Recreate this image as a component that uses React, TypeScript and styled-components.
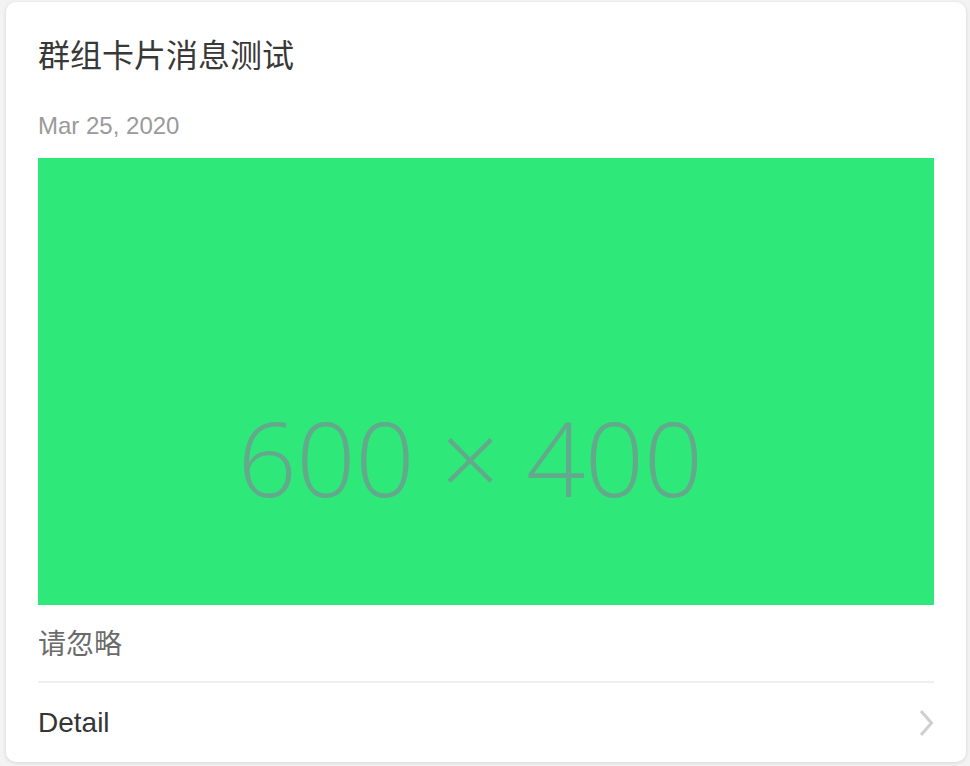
import React from "react";
import styled, { createGlobalStyle } from "styled-components";

const GlobalStyle = createGlobalStyle`
  html, body {
    margin: 0;
    padding: 0;
    background: #f3f3f3;
    font-family: "Liberation Sans", "Noto Sans CJK SC", sans-serif;
  }
`;

const Page = styled.div`
  padding: 2px 4px 4px 6px;
`;

const Card = styled.div`
  width: 960px;
  box-sizing: border-box;
  background: #ffffff;
  border-radius: 10px;
  box-shadow: 0 1px 4px rgba(0, 0, 0, 0.12);
  padding: 0 32px;
  display: flex;
  flex-direction: column;
`;

const Title = styled.h1`
  margin: 32px 0 0;
  font-family: "Liberation Sans", "Noto Sans CJK SC", sans-serif;
  font-weight: 400;
  font-size: 32px;
  line-height: 44px;
  color: #383838;
`;

const DateText = styled.div`
  margin-top: 30px;
  font-size: 24px;
  line-height: 36px;
  color: #9a9a9a;
`;

const Cover = styled.div`
  margin-top: 14px;
  height: 447px;
  overflow: hidden;
  background: #2ee97a;
`;

const CoverInner = styled.div`
  height: 597px;
  display: flex;
  align-items: center;
  justify-content: center;
  padding-right: 32px;
`;

const CoverText = styled.span`
  font-family: "Open Sans", sans-serif;
  font-weight: 300;
  font-size: 104px;
  line-height: 1;
  color: #63a98b;
  letter-spacing: -0.5px;
`;

const Caption = styled.div`
  margin-top: 22px;
  font-size: 28px;
  line-height: 36px;
  color: #6b6b6b;
`;

const Divider = styled.div`
  margin-top: 18px;
  height: 2px;
  background: #efefef;
`;

const DetailRow = styled.div`
  height: 79px;
  display: flex;
  align-items: center;
  justify-content: space-between;
`;

const DetailLabel = styled.span`
  font-size: 28px;
  color: #353535;
`;

const Chevron = () => (
  <svg width="16" height="28" viewBox="0 0 16 28" fill="none">
    <path d="M3 2 L13.5 14 L3 26" stroke="#cfcfcf" strokeWidth="3" strokeLinecap="butt" strokeLinejoin="miter" />
  </svg>
);

export default function App() {
  return (
    <>
      <GlobalStyle />
      <Page>
        <Card>
          <Title>群组卡片消息测试</Title>
          <DateText>Mar 25, 2020</DateText>
          <Cover>
            <CoverInner>
              <CoverText>600 × 400</CoverText>
            </CoverInner>
          </Cover>
          <Caption>请忽略</Caption>
          <Divider />
          <DetailRow>
            <DetailLabel>Detail</DetailLabel>
            <Chevron />
          </DetailRow>
        </Card>
      </Page>
    </>
  );
}
